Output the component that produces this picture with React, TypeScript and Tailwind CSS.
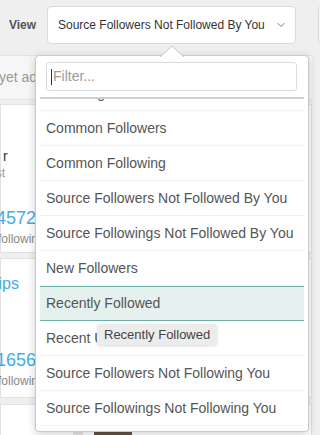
import { ChevronDown } from 'lucide-react';

const options = [
  'Following',
  'Common Followers',
  'Common Following',
  'Source Followers Not Followed By You',
  'Source Followings Not Followed By You',
  'New Followers',
  'Recently Followed',
  'Recent Unfollowers',
  'Source Followers Not Following You',
  'Source Followings Not Following You',
];

const active = 'Recently Followed';

export default function App() {
  return (
    <div className="relative w-[320px] h-[435px] overflow-hidden bg-[#efefef] font-['Liberation_Sans',Arial,sans-serif]">
      {/* Toolbar */}
      <div className="flex items-center h-[50px]">
        <span className="shrink-0 w-[47px] pl-[9px] text-[12px] font-bold text-[#555]">View</span>
        <div className="shrink-0 flex items-center justify-between w-[249px] h-[38px] pl-[10px] pr-[8px] bg-white border border-[#dadada] rounded-[4px] text-[12px] text-[#333]">
          <span className="whitespace-nowrap">Source Followers Not Followed By You</span>
          <ChevronDown className="w-[12px] h-[12px] text-[#555]" strokeWidth={1.6} />
        </div>
        <div className="shrink-0 ml-[22px] w-[40px] h-[38px] bg-[#f7f7f7] border border-[#dadada] rounded-[4px]" />
      </div>

      {/* Notice row */}
      <div className="mt-[5px] h-[45px] flex items-center bg-[#f6f6f6] border-y border-[#e3e3e3] mr-[8px]">
        <span className="-ml-[1px] whitespace-nowrap text-[14px] text-[#999]">yet added any accounts</span>
      </div>

      {/* Card 1 */}
      <div className="mt-[4px] h-[149px] mr-[8px] bg-white border border-[#e2e2e2] pt-[43px]">
        <div className="ml-[2px] text-[14px] leading-[17px] text-[#333] whitespace-nowrap">r</div>
        <div className="flex justify-end w-[4px] mt-[1px] text-[12px] leading-[15px] text-[#999] whitespace-nowrap">
          <span>@wst</span>
        </div>
        <div className="-ml-[5px] mt-[26px] text-[18px] leading-[22px] text-[#45ade6] whitespace-nowrap">4572</div>
        <div className="-ml-[3px] mt-[3px] text-[12px] leading-[15px] text-[#888] whitespace-nowrap">following</div>
      </div>

      {/* Card 2 */}
      <div className="mt-[5px] h-[140px] mr-[8px] bg-white border border-[#e2e2e2] pt-[15px]">
        <div className="flex justify-end w-[18px] text-[16px] leading-[19px] text-[#45ade6] whitespace-nowrap">
          <span>Relationships</span>
        </div>
        <div className="-ml-[5px] mt-[56px] text-[18px] leading-[22px] text-[#45ade6] whitespace-nowrap">1656</div>
        <div className="-ml-[3px] mt-[3px] text-[12px] leading-[15px] text-[#888] whitespace-nowrap">following</div>
      </div>

      {/* Card 3 */}
      <div className="mt-[6px] h-[60px] mr-[8px] bg-white border border-[#e2e2e2] flex items-start pt-[23px] pl-[72px] gap-[11px]">
        <div className="w-[10px] h-[10px] mt-[4px] bg-[#e6e6e6]" />
        <div className="w-[38px] h-[30px] bg-gradient-to-b from-[#5a4a40] to-[#8a7566]" />
      </div>

      {/* Popover */}
      <div className="absolute left-[35px] top-[55px] w-[274px] bg-white border border-[#c9c9c9] rounded-[4px] shadow-[0_2px_8px_rgba(0,0,0,0.18)] pb-[5px]">
        <svg className="absolute -top-[11px] left-[124px]" width="24" height="12" viewBox="0 0 24 12">
          <polygon points="0,12 12,1 24,12" fill="white" stroke="#c9c9c9" strokeWidth="1" />
          <rect x="1" y="11" width="22" height="2" fill="white" />
        </svg>
        <div className="pl-[10px] pr-[11px] pt-[6px] pb-[6px]">
          <div className="flex items-center h-[29px] border border-[#dcdcdc] rounded-[3px] pl-[4px]">
            <span className="w-px h-[16px] bg-[#333]" />
            <span className="ml-[1px] text-[14px] text-[#9a9a9a]">Filter...</span>
          </div>
        </div>
        <div className="mx-[4px] h-[2px] bg-[#cfcfcf]" />
        <div className="mx-[4px] h-[327px] overflow-hidden">
          <div className="-mt-[23px]">
            {options.map((opt) => (
              <div
                key={opt}
                className={`h-[35px] flex items-center px-[6px] text-[14px] text-[#555] whitespace-nowrap ${
                  opt === active
                    ? 'bg-[#e5f1ee] border-y border-[#6cafa5]'
                    : 'border-b border-[#f1f1f1]'
                }`}
              >
                {opt}
              </div>
            ))}
          </div>
        </div>
      </div>

      {/* Tooltip */}
      <div className="absolute left-[97px] top-[324px] px-[7px] py-[3px] bg-[#ececec] rounded-[3px] shadow-[0_1px_3px_rgba(0,0,0,0.15)] text-[13px] leading-[15px] text-[#444] whitespace-nowrap">
        Recently Followed
      </div>
    </div>
  );
}
